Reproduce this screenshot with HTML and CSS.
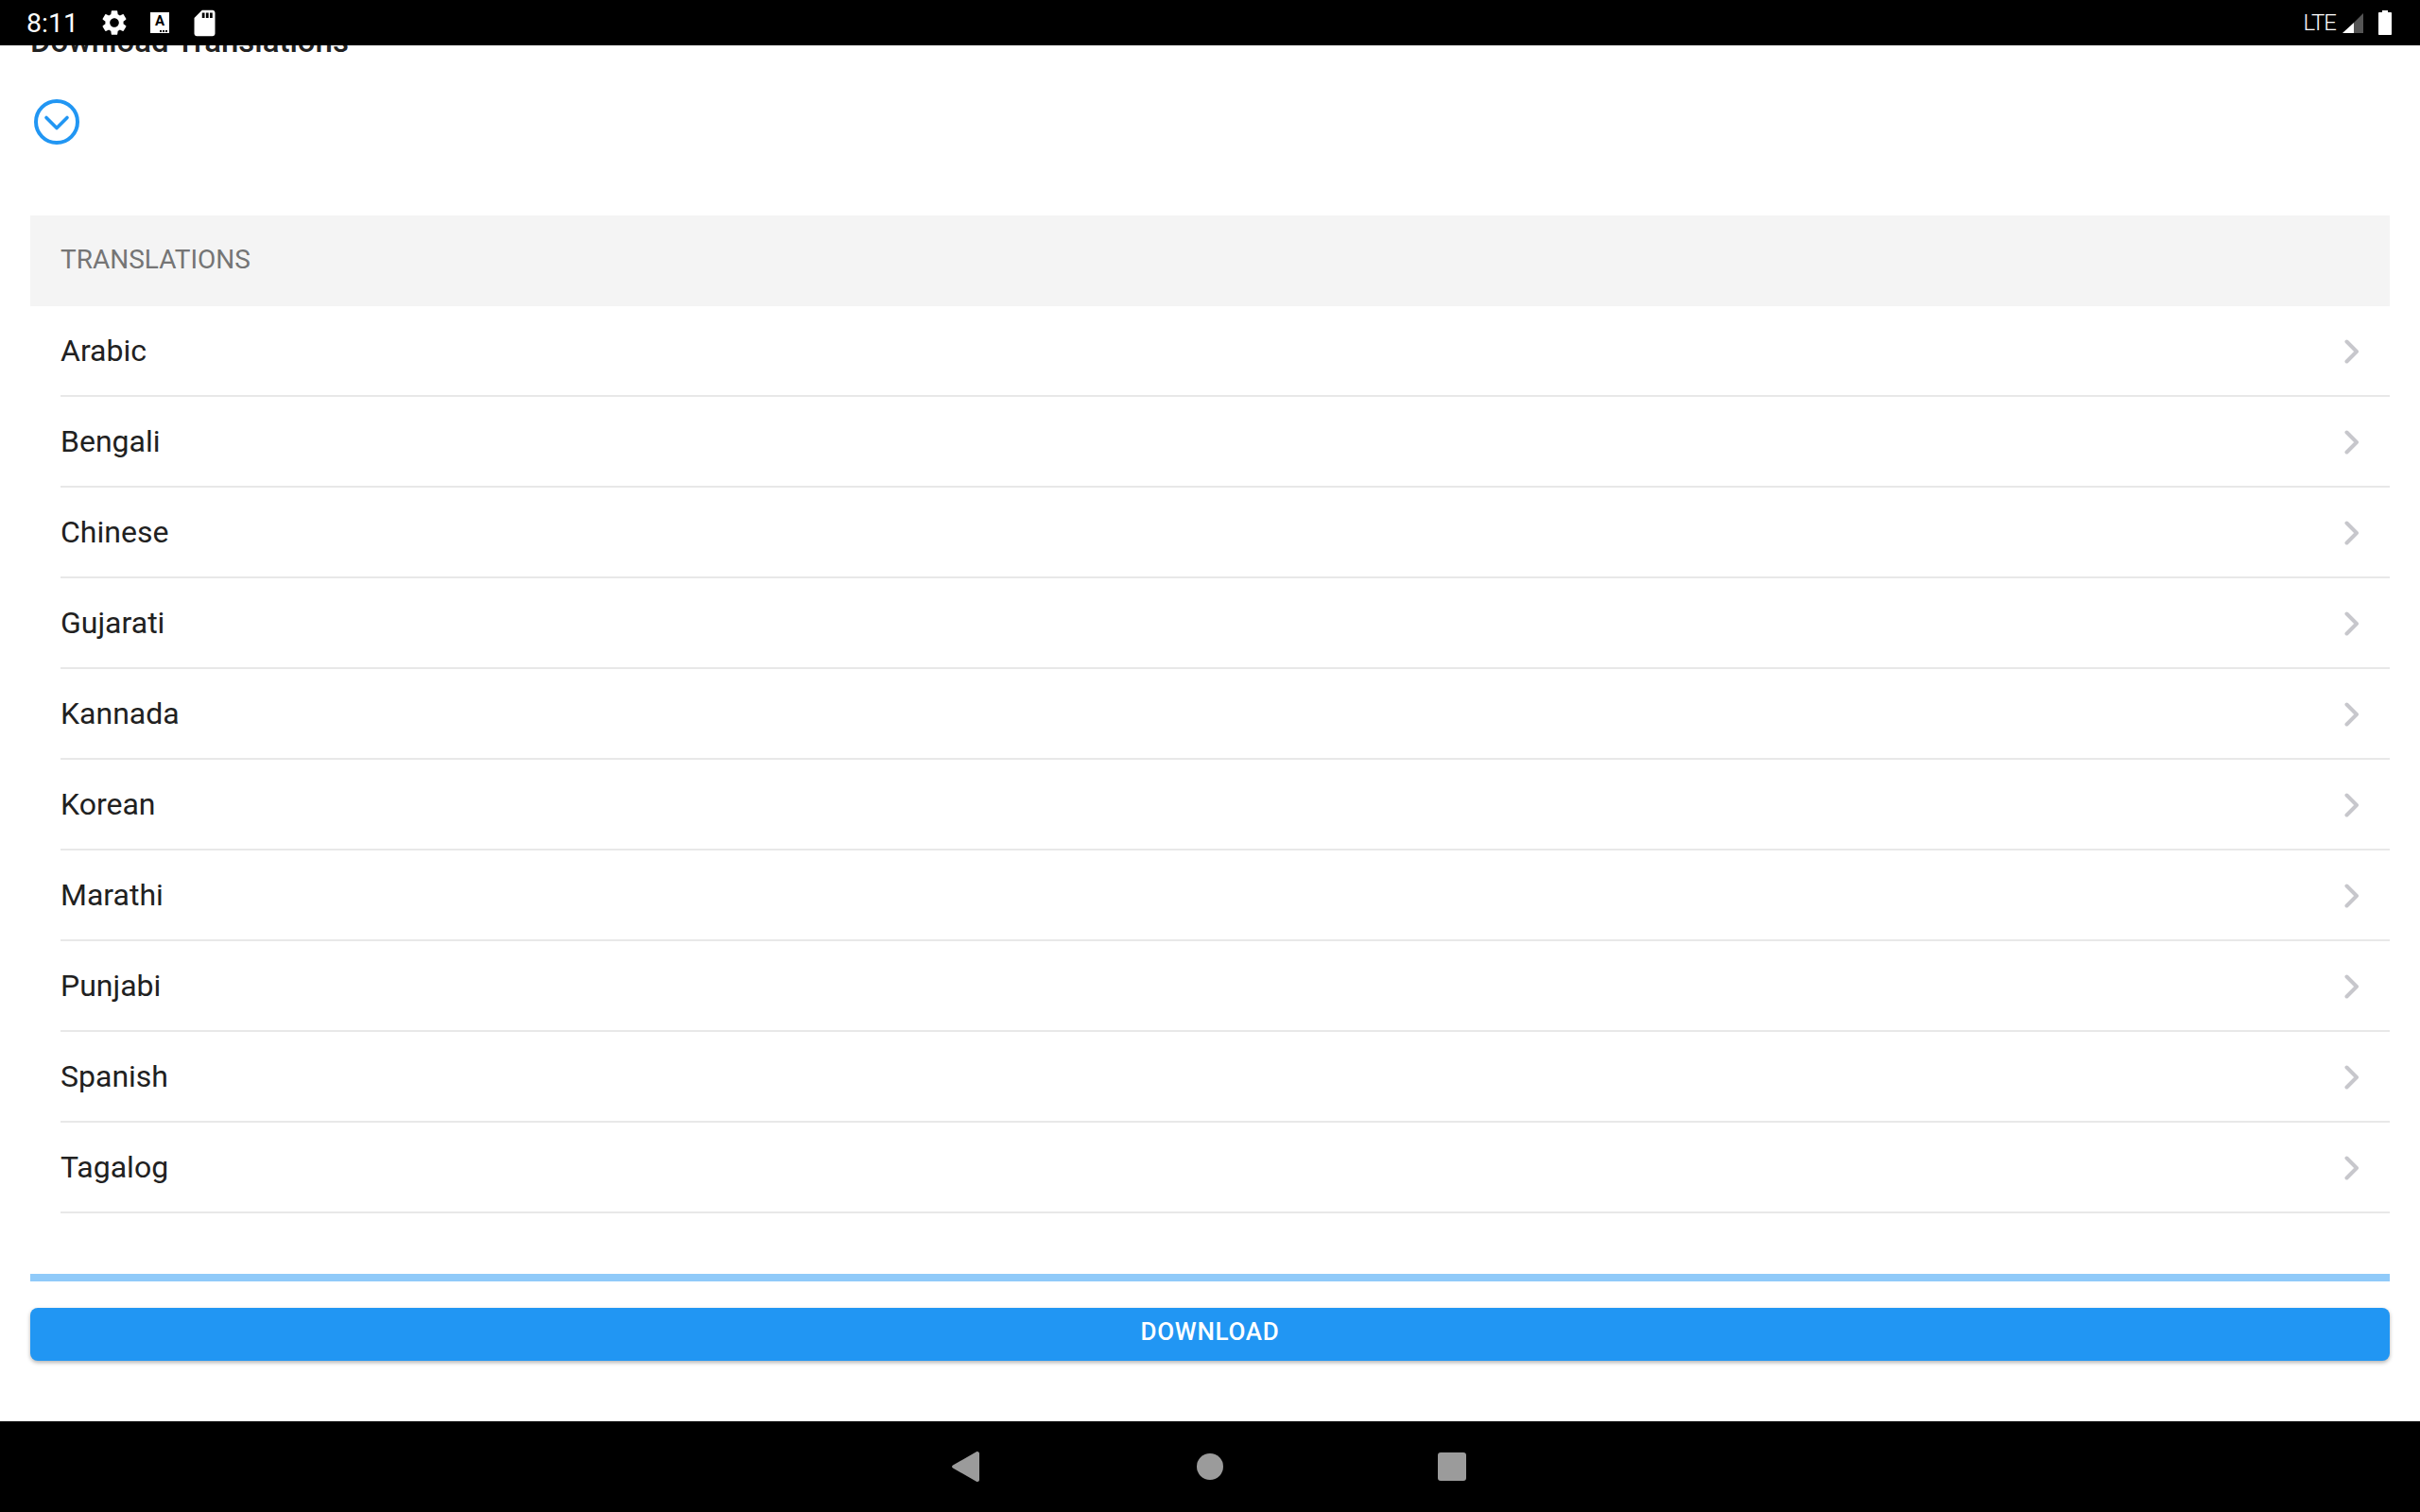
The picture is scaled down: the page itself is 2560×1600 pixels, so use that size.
FILE: index.html
```html
<!DOCTYPE html>
<html lang="en">
<head>
    <meta charset="UTF-8">
    <title>Download Translations</title>
    <link rel="stylesheet" href="styles.css">
</head>
<body>
    <div class="screen">
        <div class="status-bar">
            <div class="status-left">
                <span class="clock">8:11</span>
                <svg class="gear" viewBox="0 0 24 24"><path d="M19.14 12.94c.04-.3.06-.61.06-.94 0-.32-.02-.64-.07-.94l2.03-1.58c.18-.14.23-.41.12-.61l-1.92-3.32c-.12-.22-.37-.29-.59-.22l-2.39.96c-.5-.38-1.03-.7-1.62-.94l-.36-2.54c-.04-.24-.24-.41-.48-.41h-3.84c-.24 0-.43.17-.47.41l-.36 2.54c-.59.24-1.13.57-1.62.94l-2.39-.96c-.22-.08-.47 0-.59.22L2.74 8.87c-.12.21-.08.47.12.61l2.03 1.58c-.05.3-.09.63-.09.94s.02.64.07.94l-2.03 1.58c-.18.14-.23.41-.12.61l1.92 3.32c.12.22.37.29.59.22l2.39-.96c.5.38 1.03.7 1.62.94l.36 2.54c.05.24.24.41.48.41h3.84c.24 0 .44-.17.47-.41l.36-2.54c.59-.24 1.13-.56 1.62-.94l2.39.96c.22.08.47 0 .59-.22l1.92-3.32c.12-.22.07-.47-.12-.61l-2.01-1.58zM12 15.6c-1.98 0-3.6-1.62-3.6-3.6s1.62-3.6 3.6-3.6 3.6 1.62 3.6 3.6-1.62 3.6-3.6 3.6z"/></svg>
                <span class="a-badge">A<span class="a-dots"></span></span>
                <svg class="sdcard" viewBox="0 0 24 24"><path d="M18 2h-8L4.02 8 4 20c0 1.1.9 2 2 2h12c1.1 0 2-.9 2-2V4c0-1.1-.9-2-2-2zm-6 6h-2V4h2v4zm3 0h-2V4h2v4zm3 0h-2V4h2v4z"/></svg>
            </div>
            <div class="status-right">
                <span class="network">LTE</span>
                <svg class="signal" viewBox="0 0 22 21"><path fill="#555" d="M22 0v21H12V10z"/><path fill="#fff" d="M12 10v11H0z"/></svg>
                <svg class="battery" viewBox="0 0 14 26"><path fill="#fff" d="M4 0h6v2h3c.6 0 1 .4 1 1v22c0 .6-.4 1-1 1H1c-.6 0-1-.4-1-1V3c0-.6.4-1 1-1h3z"/></svg>
            </div>
        </div>

        <div class="content">
            <h2 class="title">Download Translations</h2>
            <div class="toggle">
                <svg viewBox="0 0 48 48"><circle cx="24" cy="24" r="22" fill="none" stroke="#2196f3" stroke-width="4"/><path d="M13 19.500l11 11 11-11" fill="none" stroke="#2196f3" stroke-width="3.600" stroke-linecap="round" stroke-linejoin="round"/></svg>
            </div>

            <div class="section-head">TRANSLATIONS</div>
            <ul class="lang-list">
                <li class="lang-row"><span>Arabic</span><svg class="chevron" viewBox="0 0 16 26"><path d="M2.5 2.5L13 13 2.5 23.5"/></svg></li>
                <li class="lang-row"><span>Bengali</span><svg class="chevron" viewBox="0 0 16 26"><path d="M2.5 2.5L13 13 2.5 23.5"/></svg></li>
                <li class="lang-row"><span>Chinese</span><svg class="chevron" viewBox="0 0 16 26"><path d="M2.5 2.5L13 13 2.5 23.5"/></svg></li>
                <li class="lang-row"><span>Gujarati</span><svg class="chevron" viewBox="0 0 16 26"><path d="M2.5 2.5L13 13 2.5 23.5"/></svg></li>
                <li class="lang-row"><span>Kannada</span><svg class="chevron" viewBox="0 0 16 26"><path d="M2.5 2.5L13 13 2.5 23.5"/></svg></li>
                <li class="lang-row"><span>Korean</span><svg class="chevron" viewBox="0 0 16 26"><path d="M2.5 2.5L13 13 2.5 23.5"/></svg></li>
                <li class="lang-row"><span>Marathi</span><svg class="chevron" viewBox="0 0 16 26"><path d="M2.5 2.5L13 13 2.5 23.5"/></svg></li>
                <li class="lang-row"><span>Punjabi</span><svg class="chevron" viewBox="0 0 16 26"><path d="M2.5 2.5L13 13 2.5 23.5"/></svg></li>
                <li class="lang-row"><span>Spanish</span><svg class="chevron" viewBox="0 0 16 26"><path d="M2.5 2.5L13 13 2.5 23.5"/></svg></li>
                <li class="lang-row"><span>Tagalog</span><svg class="chevron" viewBox="0 0 16 26"><path d="M2.5 2.5L13 13 2.5 23.5"/></svg></li>
            </ul>

            <div class="progress"></div>
            <button class="download-btn">DOWNLOAD</button>
        </div>

        <div class="nav-bar">
            <div class="nav-item"><svg class="nav-back" viewBox="0 0 29 32"><path d="M27 0c1 0 2 1 2 2v28c0 1-1 2-2 2-.4 0-.8-.1-1.100-.3L1 17.500c-1.300-.8-1.300-2.200 0-3L25.900.3c.3-.2.7-.3 1.100-.3z"/></svg></div>
            <div class="nav-item"><span class="nav-home"></span></div>
            <div class="nav-item"><span class="nav-recent"></span></div>
        </div>
    </div>
</body>
</html>
```

FILE: styles.css
```css
* {
    box-sizing: border-box;
}

body {
    margin: 0;
    font-family: Roboto, sans-serif;
    background-color: #fff;
}

.screen {
    display: flex;
    flex-direction: column;
    height: 1600px;
    overflow: hidden;
}

.status-bar {
    position: relative;
    z-index: 1;
    flex: 0 0 48px;
    display: flex;
    justify-content: space-between;
    align-items: center;
    padding: 0 30px 0 28px;
    background-color: #000;
    color: #fff;
}

.status-left,
.status-right {
    display: flex;
    align-items: center;
}

.clock {
    font-size: 28.5px;
    width: 77px;
}

.gear {
    width: 32px;
    height: 32px;
    fill: #fff;
    margin-right: 22px;
}

.a-badge {
    position: relative;
    width: 20px;
    height: 22px;
    margin-right: 21px;
    background-color: #fff;
    color: #000;
    font-size: 15px;
    font-weight: 700;
    line-height: 18px;
    text-align: center;
}

.a-dots {
    position: absolute;
    right: 1px;
    bottom: 1px;
    width: 9px;
    height: 2px;
    background: repeating-linear-gradient(90deg, #000 0 2px, #fff 2px 3px);
}

.sdcard {
    width: 33px;
    height: 33px;
    fill: #fff;
}

.network {
    font-size: 24px;
    font-weight: 300;
    letter-spacing: -1px;
    margin-right: 7px;
}

.signal {
    width: 22px;
    height: 21px;
    margin-right: 16px;
}

.battery {
    width: 14px;
    height: 26px;
}

.content {
    flex: 1;
    padding: 0 32px;
    min-height: 0;
}

.title {
    margin: -23px 0 0;
    font-size: 33px;
    line-height: 38px;
    font-weight: 500;
    color: #212121;
}

.toggle {
    height: 48px;
    width: 48px;
    margin: 42px 0 0 4px;
}

.toggle svg {
    display: block;
    width: 48px;
    height: 48px;
}

.section-head {
    margin-top: 75px;
    height: 96px;
    padding-left: 32px;
    line-height: 94px;
    font-size: 28px;
    color: #757575;
    background-color: #f4f4f4;
}

.lang-list {
    list-style: none;
    margin: 0;
    padding: 0;
}

.lang-row {
    display: flex;
    justify-content: space-between;
    align-items: center;
    height: 96px;
    margin-left: 32px;
    padding-right: 32px;
    border-bottom: 2px solid #e8e8e8;
    font-size: 32px;
    color: #212121;
}

.chevron {
    width: 16px;
    height: 26px;
    margin-top: 2px;
    fill: none;
    stroke: #c7c7cc;
    stroke-width: 4;
    stroke-linecap: round;
    stroke-linejoin: round;
}

.progress {
    height: 8px;
    margin-top: 64px;
    background-color: #90caf9;
}

.download-btn {
    display: block;
    width: 100%;
    height: 56px;
    margin-top: 28px;
    padding: 0 0 6px;
    border: none;
    border-radius: 8px;
    background-color: #2196f3;
    color: #fff;
    font-family: Roboto, sans-serif;
    font-size: 26px;
    font-weight: 500;
    letter-spacing: 0.7px;
    box-shadow: 0 2px 4px rgba(0, 0, 0, 0.3);
}

.nav-bar {
    flex: 0 0 96px;
    display: flex;
    justify-content: center;
    align-items: center;
    background-color: #000;
}

.nav-item {
    display: flex;
    justify-content: center;
    width: 256px;
}

.nav-back {
    width: 29px;
    height: 32px;
    margin-right: 5px;
    fill: #9b9b9b;
}

.nav-home {
    width: 28px;
    height: 28px;
    border-radius: 50%;
    background-color: #9b9b9b;
}

.nav-recent {
    width: 30px;
    height: 30px;
    border-radius: 3px;
    background-color: #9b9b9b;
}
```
